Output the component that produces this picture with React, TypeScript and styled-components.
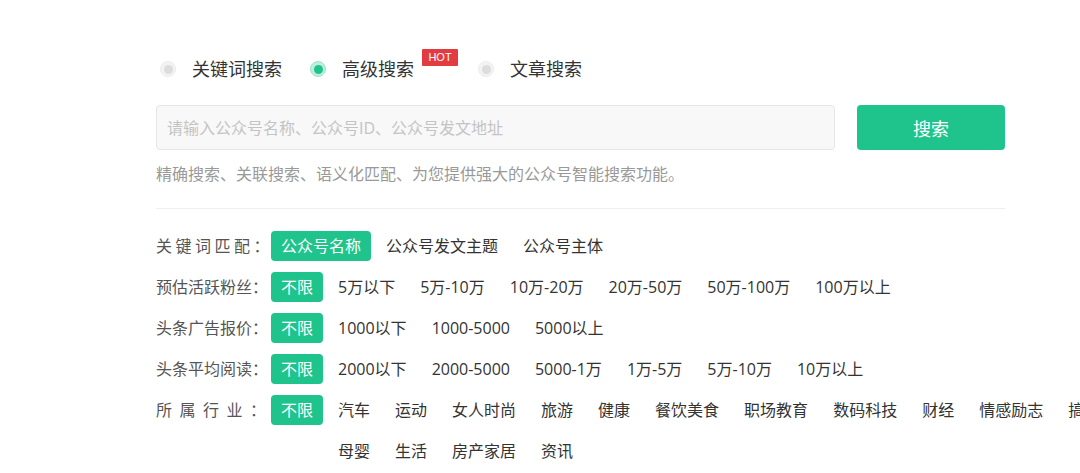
import { FunctionComponent, useState } from "react";
import styled, { createGlobalStyle, css } from "styled-components";

const GREEN = "#1fc48c";

const GlobalStyle = createGlobalStyle`
  html, body {
    margin: 0;
    padding: 0;
    background: #fff;
    overflow: hidden;
  }
  body {
    font-family: "Open Sans", "Noto Sans CJK SC", sans-serif;
    color: #333;
  }
`;

interface FilterGroup {
  label: string;
  spread: number;
  options: string[];
  hasAll: boolean;
}

const groups: FilterGroup[] = [
  {
    label: "关键词匹配：",
    spread: 3.5,
    options: ["公众号名称", "公众号发文主题", "公众号主体"],
    hasAll: false,
  },
  {
    label: "预估活跃粉丝：",
    spread: 0,
    options: ["5万以下", "5万-10万", "10万-20万", "20万-50万", "50万-100万", "100万以上"],
    hasAll: true,
  },
  {
    label: "头条广告报价：",
    spread: 0,
    options: ["1000以下", "1000-5000", "5000以上"],
    hasAll: true,
  },
  {
    label: "头条平均阅读：",
    spread: 0,
    options: ["2000以下", "2000-5000", "5000-1万", "1万-5万", "5万-10万", "10万以上"],
    hasAll: true,
  },
  {
    label: "所属行业：",
    spread: 7.5,
    options: [
      "汽车", "运动", "女人时尚", "旅游", "健康", "餐饮美食", "职场教育",
      "数码科技", "财经", "情感励志", "搞笑", "母婴", "生活", "房产家居", "资讯",
    ],
    hasAll: true,
  },
];

const modes = ["关键词搜索", "高级搜索", "文章搜索"];

const App: FunctionComponent = () => {
  const [mode, setMode] = useState(1);

  return (
    <>
      <GlobalStyle />
      <Page>
        <ModeRow>
          {modes.map((m, i) => (
            <ModeItem key={m} onClick={() => setMode(i)}>
              <Radio checked={mode === i} />
              <ModeLabel>{m}</ModeLabel>
              {i === 1 && <HotBadge>HOT</HotBadge>}
            </ModeItem>
          ))}
        </ModeRow>

        <SearchRow>
          <SearchInput placeholder="请输入公众号名称、公众号ID、公众号发文地址" />
          <SearchButton>搜索</SearchButton>
        </SearchRow>

        <Hint>精确搜索、关联搜索、语义化匹配、为您提供强大的公众号智能搜索功能。</Hint>

        <Divider />

        <Filters>
          {groups.map((g) => (
            <FilterRow key={g.label}>
              <FilterLabel spread={g.spread}>{g.label}</FilterLabel>
              {g.hasAll && <Option active>不限</Option>}
              <OptionList>
                {g.options.map((o, i) => (
                  <Option key={o} active={!g.hasAll && i === 0}>
                    {o}
                  </Option>
                ))}
              </OptionList>
            </FilterRow>
          ))}
        </Filters>
      </Page>
    </>
  );
};

const Page = styled.div`
  width: 849px;
  padding: 49px 0 0 156px;
`;

const ModeRow = styled.div`
  display: flex;
  align-items: center;
  height: 40px;
  padding-left: 4px;
`;

const ModeItem = styled.div`
  display: flex;
  align-items: center;
  height: 40px;
  margin-right: 28px;
  cursor: pointer;

  &:nth-child(2) {
    margin-right: 20px;
  }
`;

const Radio = styled.span<{ checked: boolean }>`
  box-sizing: border-box;
  width: 16px;
  height: 16px;
  border-radius: 50%;
  margin-right: 16px;
  position: relative;
  ${({ checked }) =>
    checked
      ? css`
          background: #bfeedd;
          border: 1px solid #9fe2c9;
        `
      : css`
          background: #f3f3f3;
          border: 1px solid #ececec;
        `}

  &::after {
    content: "";
    position: absolute;
    left: 2.5px;
    top: 2.5px;
    width: 9px;
    height: 9px;
    border-radius: 50%;
    background: ${({ checked }) => (checked ? GREEN : "#dcdcdc")};
  }
`;

const ModeLabel = styled.span`
  font-size: 18px;
  line-height: 24px;
  color: #333;
`;

const HotBadge = styled.span`
  align-self: flex-start;
  margin-left: 8px;
  width: 36px;
  height: 17px;
  background: #e23b41;
  color: #fff;
  font-family: "Liberation Sans", Arial, sans-serif;
  font-size: 11px;
  line-height: 17px;
  text-align: center;
  border-radius: 1px;
`;

const SearchRow = styled.div`
  display: flex;
  gap: 22px;
  margin-top: 16px;
`;

const SearchInput = styled.input`
  box-sizing: border-box;
  width: 679px;
  height: 45px;
  padding: 0 10px;
  border: 1px solid #e6e6e6;
  border-radius: 4px;
  background: #f8f8f8;
  font-family: inherit;
  font-size: 16px;
  color: #333;
  outline: none;

  &::placeholder {
    color: #c4c4c4;
  }
`;

const SearchButton = styled.button`
  width: 148px;
  height: 45px;
  border: none;
  border-radius: 4px;
  background: ${GREEN};
  color: #fff;
  font-family: inherit;
  font-size: 18px;
  cursor: pointer;
`;

const Hint = styled.div`
  margin-top: 12px;
  font-size: 16px;
  line-height: 24px;
  color: #999;
`;

const Divider = styled.div`
  margin-top: 22px;
  height: 1px;
  background: #efefef;
`;

const Filters = styled.div`
  display: flex;
  flex-direction: column;
  gap: 11px;
  margin-top: 22px;
`;

const FilterRow = styled.div`
  display: flex;
  align-items: flex-start;
  gap: 5px;
`;

const FilterLabel = styled.div<{ spread: number }>`
  flex: none;
  width: 110px;
  font-size: 16px;
  line-height: 30px;
  color: #555;
  white-space: nowrap;
  letter-spacing: ${({ spread }) => spread}px;
`;

const OptionList = styled.div`
  display: flex;
  flex-wrap: wrap;
  width: 800px;
  flex: none;
  column-gap: 5px;
  row-gap: 11px;
`;

const Option = styled.span<{ active?: boolean }>`
  flex: none;
  height: 30px;
  padding: 0 10px;
  border-radius: 4px;
  font-size: 16px;
  line-height: 30px;
  white-space: nowrap;
  cursor: pointer;
  color: ${({ active }) => (active ? "#fff" : "#333")};
  background: ${({ active }) => (active ? GREEN : "transparent")};
`;

export default App;
